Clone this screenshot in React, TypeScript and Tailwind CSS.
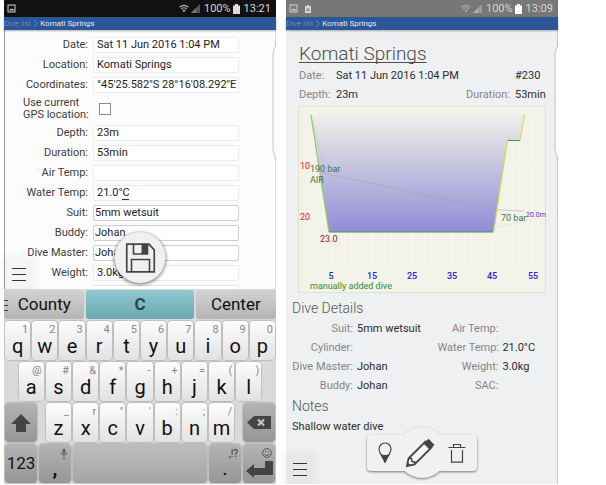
import React from "react";

const FONT = "font-['Roboto','Liberation_Sans',sans-serif]";

function PictureIcon({ className = "" }: { className?: string }) {
  return (
    <svg viewBox="0 0 9 9" className={`h-[9px] w-[9px] ${className}`} aria-hidden="true">
      <rect x="1" y="1" width="7" height="7" fill="none" stroke="currentColor" />
      <path d="M2 6.5 4 4.5 5 5.5 6 4.5 7 6.5Z" fill="currentColor" />
    </svg>
  );
}

function StatusBar({ time, dark }: { time: string; dark?: boolean }) {
  return (
    <div
      className={`flex h-[17px] items-center pr-[5px] pl-[3px] text-[11px] leading-[17px] text-[#d4d4d4] ${
        dark ? "bg-[#111111]" : "bg-[#777777]"
      }`}
    >
      <PictureIcon />
      {!dark && (
        <svg viewBox="0 0 8 10" className="ml-[6px] h-[10px] w-[8px]" aria-hidden="true">
          <path d="M1 2h2V1h2v1h2v7H1Z" fill="currentColor" />
          <path d="M2.5 6.5 4 4.2l1.5 2.3Z" fill="none" stroke="#777" strokeWidth=".8" />
        </svg>
      )}
      <svg viewBox="0 0 10 9" className="ml-auto h-[9px] w-[10px]" aria-hidden="true">
        <path d="M.7 3.2a6.2 6.2 0 0 1 8.6 0M2.2 5a4 4 0 0 1 5.6 0" fill="none" stroke="#aaa" strokeWidth="1.2" />
        <path d="M3.4 6.3a2.4 2.4 0 0 1 3.2 0L5 8.4Z" fill="#aaa" />
      </svg>
      <svg viewBox="0 0 9 9" className="ml-[2px] h-[9px] w-[9px]" aria-hidden="true">
        <path d="M9 0v9H0Z" fill={dark ? "#555" : "#9a9a9a"} />
        <path d="M5 4v5H0Z" fill={dark ? "#777" : "#b0b0b0"} />
      </svg>
      <span className="ml-1">100%</span>
      <svg viewBox="0 0 7 10" className="ml-[2px] h-[10px] w-[7px]" aria-hidden="true">
        <path d="M0 1.4h2V0h3v1.4h2V10H0Z" fill={dark ? "#ddd" : "#fff"} />
      </svg>
      <span className="ml-1">{time}</span>
    </div>
  );
}

function Breadcrumb() {
  return (
    <nav className="relative z-10 flex h-[13px] items-center bg-[#2b5797] text-[8px] leading-[13px] shadow-[0_1px_2px_rgba(0,0,0,0.3)]">
      <a href="#dives" className="font-light text-[#7f9fcb]">
        Dive list
      </a>
      <svg viewBox="0 0 5 9" className="mr-[2px] ml-[2px] h-[9px] w-[5px]" aria-hidden="true">
        <path d="M.8.8 4.2 4.5.8 8.2" fill="none" stroke="#6f93c6" strokeWidth=".9" />
      </svg>
      <a href="#dive" className="text-[#e4ebf5]">
        Komati Springs
      </a>
    </nav>
  );
}

function ScreenEdge() {
  return (
    <svg viewBox="0 0 4 120" className="absolute top-[42px] right-0 z-20 h-[120px] w-[4px]" aria-hidden="true">
      <path d="M4 0 3.5 4C3 7 1 8 1 13V106C1 110 3 112 3.5 116L4 120Z" fill="#fff" />
      <path d="M3.5 0V3C3 7 1 8 1 13V106C1 110 3 112 3.5 118" fill="none" stroke="#b5b8ba" strokeWidth=".8" />
    </svg>
  );
}

function MenuButton() {
  return (
    <button
      type="button"
      aria-label="Menu"
      className="absolute bottom-0 left-0 flex h-[29px] w-[27px] flex-col items-end justify-center gap-[5px] bg-black/3 pr-[6px] shadow-[0_0_8px_4px_rgba(0,0,0,0.04)]"
    >
      <span className="h-px w-[14px] bg-[#333]" />
      <span className="h-px w-[14px] bg-[#333]" />
      <span className="h-px w-[14px] bg-[#333]" />
    </button>
  );
}

type Field = { id: string; label: string; value: string; combo?: boolean; composing?: boolean };

const topFields: Field[] = [
  { id: "date", label: "Date:", value: "Sat 11 Jun 2016 1:04 PM" },
  { id: "location", label: "Location:", value: "Komati Springs" },
  { id: "coordinates", label: "Coordinates:", value: "°45'25.582\"S 28°16'08.292\"E" },
];

const bottomFields: Field[] = [
  { id: "depth", label: "Depth:", value: "23m" },
  { id: "duration", label: "Duration:", value: "53min" },
  { id: "air", label: "Air Temp:", value: "" },
  { id: "water", label: "Water Temp:", value: "21.0°C", composing: true },
  { id: "suit", label: "Suit:", value: "5mm wetsuit", combo: true },
  { id: "buddy", label: "Buddy:", value: "Johan", combo: true },
  { id: "master", label: "Dive Master:", value: "Johan", combo: true },
  { id: "weight", label: "Weight:", value: "3.0kg" },
];

function FieldRow({ field }: { field: Field }) {
  return (
    <div className="flex h-5 items-center gap-[5px]">
      <label htmlFor={field.id} className="w-[83px] shrink-0 text-right leading-5 text-[#3c3c3c]">
        {field.label}
      </label>
      <div className="relative flex min-w-0 flex-1">
        <input
          id={field.id}
          defaultValue={field.value}
          className={`h-4 w-full min-w-0 rounded-[2px] border bg-white text-[#1c1c1c] outline-none ${
            field.combo ? "border-[#cfcfcf] pl-px" : "border-[#ececec] pl-[3px]"
          }`}
        />
        {field.composing && <span className="absolute bottom-px left-[29px] h-px w-[7px] bg-[#333]" />}
      </div>
    </div>
  );
}

function SaveIcon() {
  return (
    <svg viewBox="0 0 30 30" className="h-[30px] w-[30px]" aria-hidden="true">
      <path d="M1.2 1.2H23.5L28.8 7V28.8H1.2Z" fill="none" stroke="#444" strokeWidth="1.8" />
      <path d="M8 1.5V11H22V1.5" fill="none" stroke="#444" strokeWidth="1.6" />
      <rect x="16" y="1" width="6" height="10" fill="#444" />
      <path d="M6 28.5V16.5H24V28.5" fill="none" stroke="#444" strokeWidth="1.6" />
    </svg>
  );
}

const lightKey = "bg-linear-to-b from-[#fdfdfd] to-[#e2e2e2]";
const greyKey = "bg-linear-to-b from-[#b4b4b4] to-[#969696]";
const keyBase =
  "relative flex h-full w-full justify-center rounded-[4px] text-[#111] shadow-[0_0_1px_1px_rgba(0,0,0,0.13)]";

function LetterKey({ k, hint }: { k: string; hint: string }) {
  return (
    <div className="col-span-4 p-px">
      <button type="button" className={`${keyBase} ${lightKey} items-end pb-1 text-[20px] leading-5`}>
        {k}
        <span className="absolute top-[3px] right-[2px] text-[11px] leading-3 text-[#888]">{hint}</span>
      </button>
    </div>
  );
}

function KeyRow({ children }: { children: React.ReactNode }) {
  return <div className="grid h-[41px] grid-cols-[repeat(40,minmax(0,1fr))]">{children}</div>;
}

const row1 = [["q", "1"], ["w", "2"], ["e", "3"], ["r", "4"], ["t", "5"], ["y", "6"], ["u", "7"], ["i", "8"], ["o", "9"], ["p", "0"]];
const row2 = [["a", "@"], ["s", "#"], ["d", "&"], ["f", "*"], ["g", "-"], ["h", "+"], ["j", "="], ["k", "("], ["l", ")"]];
const row3 = [["z", "_"], ["x", "r"], ["c", "\""], ["v", "'"], ["b", ":"], ["n", ";"], ["m", "/"]];

function Keyboard() {
  return (
    <div className="bg-[#dadada] pt-px">
      <div className="grid h-[30px] grid-cols-[3fr_4fr_3fr] gap-[2px] pb-px text-[17px] text-[#111]">
        <button type="button" className="relative rounded-[3px] bg-linear-to-b from-[#d2d2d2] to-[#b5b5b5]">
          County
          <span className="absolute top-[10px] left-0 flex flex-col gap-1">
            <i className="h-px w-1 bg-[#444]" />
            <i className="h-px w-1 bg-[#444]" />
            <i className="h-px w-1 bg-[#444]" />
          </span>
        </button>
        <button
          type="button"
          className="rounded-[3px] bg-linear-to-b from-[#92c8cf] to-[#69a8b2] font-bold text-[#27474c]"
        >
          C
        </button>
        <button type="button" className="rounded-[3px] bg-linear-to-b from-[#d2d2d2] to-[#b5b5b5]">
          Center
        </button>
      </div>
      <KeyRow>
        {row1.map(([k, h]) => (
          <LetterKey key={k} k={k} hint={h} />
        ))}
      </KeyRow>
      <KeyRow>
        <div className="col-span-2" />
        {row2.map(([k, h]) => (
          <LetterKey key={k} k={k} hint={h} />
        ))}
      </KeyRow>
      <KeyRow>
        <div className="col-span-5 p-px">
          <button type="button" aria-label="Shift" className={`${keyBase} ${greyKey} items-center`}>
            <svg viewBox="0 0 20 18" className="h-[18px] w-[20px]" aria-hidden="true">
              <path d="M10 0 20 10H15V18H5V10H0Z" fill="#444" />
            </svg>
          </button>
        </div>
        <div />
        {row3.map(([k, h]) => (
          <LetterKey key={k} k={k} hint={h} />
        ))}
        <div />
        <div className="col-span-5 p-px">
          <button type="button" aria-label="Backspace" className={`${keyBase} ${greyKey} items-center`}>
            <svg viewBox="0 0 24 13" className="h-[13px] w-[24px]" aria-hidden="true">
              <path d="M0 6.5 7 0H24V13H7Z" fill="#444" />
              <path d="M11 3.5 17 9.5M17 3.5 11 9.5" stroke="#c4c4c4" strokeWidth="2.2" />
            </svg>
          </button>
        </div>
      </KeyRow>
      <KeyRow>
        <div className="col-span-5 p-px">
          <button type="button" className={`${keyBase} ${greyKey} items-center text-[17px]`}>
            123
          </button>
        </div>
        <div className="col-span-5 p-px">
          <button type="button" className={`${keyBase} ${greyKey} items-end pb-[5px] text-[20px] leading-5 font-bold`}>
            ,
            <svg viewBox="0 0 8 11" className="absolute top-1 right-[3px] h-[11px] w-[8px]" aria-hidden="true">
              <rect x="2.5" y=".5" width="3" height="6" rx="1.5" fill="#666" />
              <path d="M1 4.5a3 3 0 0 0 6 0M4 7.5V10M2.5 10.3h3" fill="none" stroke="#666" strokeWidth=".8" />
            </svg>
          </button>
        </div>
        <div className="col-span-20 p-px">
          <button
            type="button"
            aria-label="Space"
            className={`${keyBase} bg-linear-to-b from-[#bebebe] to-[#a4a4a4]`}
          />
        </div>
        <div className="col-span-5 p-px">
          <button type="button" className={`${keyBase} ${greyKey} items-end pb-[5px] text-[20px] leading-5`}>
            .<span className="absolute top-1 right-[3px] text-[10px] leading-3 text-[#333]">,!?</span>
          </button>
        </div>
        <div className="col-span-5 p-px">
          <button type="button" aria-label="Enter" className={`${keyBase} ${greyKey} items-end pb-[5px]`}>
            <svg viewBox="0 0 27 17" className="h-[17px] w-[27px]" aria-hidden="true">
              <path d="M0 10 8 3V7H19V0H27V14H8V17Z" fill="#444" />
            </svg>
            <svg viewBox="0 0 10 10" className="absolute top-1 right-[3px] h-[10px] w-[10px]" aria-hidden="true">
              <circle cx="5" cy="5" r="4.4" fill="none" stroke="#444" strokeWidth=".8" />
              <path d="M2.6 5.8a2.5 2.5 0 0 0 4.8 0M3.6 3v1M6.4 3v1" fill="none" stroke="#444" strokeWidth=".8" />
            </svg>
          </button>
        </div>
      </KeyRow>
    </div>
  );
}

function EditScreen() {
  return (
    <section className="relative flex min-w-0 flex-1 flex-col">
      <StatusBar time="13:21" dark />
      <Breadcrumb />
      <ScreenEdge />
      <form className="relative border-x border-l-[#9a9a9a] border-r-[#dcdcdc] bg-[#fcfcfd] pt-[5px] pr-[36px] text-[11px]">
        {topFields.map((f) => (
          <FieldRow key={f.id} field={f} />
        ))}
        <div className="flex h-7 items-center gap-[5px] text-[#3c3c3c]">
          <label htmlFor="gps" className="w-[83px] shrink-0 pl-[18px] leading-3 whitespace-nowrap">
            Use current
            <br />
            GPS location:
          </label>
          <input
            id="gps"
            type="checkbox"
            className="ml-[6px] h-3 w-3 appearance-none border border-[#8a8a8a] bg-white"
          />
        </div>
        {bottomFields.map((f) => (
          <FieldRow key={f.id} field={f} />
        ))}
        <div className="h-[6px] overflow-hidden pt-[2px] pl-[88px]">
          <input aria-label="Cylinder" className="block h-4 w-full rounded-[2px] border border-[#e4e4e4] bg-white" />
        </div>
        <MenuButton />
        <button
          type="button"
          aria-label="Save"
          className="absolute bottom-[6px] left-1/2 flex h-[51px] w-[51px] -translate-x-1/2 items-center justify-center rounded-full bg-[#f0f0f1] shadow-[0_1px_3px_1px_rgba(0,0,0,0.4)]"
        >
          <SaveIcon />
        </button>
      </form>
      <Keyboard />
    </section>
  );
}

function ProfileChart() {
  return (
    <svg viewBox="0 0 248 187" className={`mt-[2px] block w-full ${FONT}`} role="img" aria-label="Dive profile">
      <defs>
        <linearGradient id="depthFill" x1="0" y1="0" x2="0" y2="1">
          <stop offset="0" stopColor="#efefec" />
          <stop offset=".3" stopColor="#d3d2e2" />
          <stop offset="1" stopColor="#918cd6" />
        </linearGradient>
      </defs>
      <rect x=".5" y=".5" width="247" height="186" fill="#f3f3e9" stroke="#dfe2cc" />
      <g stroke="#f8f8f1">
        {[33, 53, 73, 93, 113, 133, 153, 173, 194, 214, 234].map((x) => (
          <path key={x} d={`M${x}.5 9V158`} />
        ))}
        <path d="M13 59.5H240M13 110.5H240M13 158.5H240" />
      </g>
      <path d="M13 9 31 126H196L209.5 34.5H222L226.5 9Z" fill="url(#depthFill)" />
      <path d="M24 67 199 104 226 105" fill="none" stroke="#a09bbd" strokeOpacity=".5" />
      <path d="M13 9C25 60 35 92 62 104" fill="none" stroke="#a9a5cd" strokeOpacity=".3" />
      <path d="M199 121 240 112" fill="none" stroke="#e6e6de" />
      <path d="M13 9 31 126" stroke="#8ecb5a" strokeWidth="1.2" />
      <path d="M31 126H195.5M209.5 34.5H222" stroke="#3f9a52" strokeWidth="1.2" />
      <path d="M195.5 126 209.5 34.5M222 34.5 226.5 8" stroke="#d8dc55" strokeWidth="1.2" />
      <g fontSize="9">
        <g fill="#f02020" textAnchor="end">
          <text x="12" y="63">10</text>
          <text x="12" y="114">20</text>
        </g>
        <g fill="#3f6f4a">
          <text x="12" y="66">190 bar</text>
          <text x="12" y="77">AIR</text>
          <text x="203" y="115">70 bar</text>
        </g>
        <text x="22" y="136" fill="#8c1c30">23.0</text>
        <g fill="#2a1ee0" textAnchor="middle" fontWeight="500">
          <text x="33" y="173">5</text>
          <text x="74" y="173">15</text>
          <text x="114" y="173">25</text>
          <text x="154" y="173">35</text>
          <text x="194" y="173">45</text>
          <text x="235" y="173">55</text>
        </g>
        <text x="12" y="183" fill="#2f8a35">manually added dive</text>
      </g>
      <text x="228" y="111" fontSize="7" fill="#4038c8">20.0m</text>
    </svg>
  );
}

const details = [
  ["Suit:", "5mm wetsuit", "Air Temp:", ""],
  ["Cylinder:", "", "Water Temp:", "21.0°C"],
  ["Dive Master:", "Johan", "Weight:", "3.0kg"],
  ["Buddy:", "Johan", "SAC:", ""],
];

function ActionBar() {
  return (
    <div className="absolute bottom-[6px] left-1/2 flex h-[51px] w-[110px] -translate-x-1/2 items-center justify-center drop-shadow-[0_1px_1px_rgba(0,0,0,0.5)]">
      <div className="absolute inset-x-0 top-2 h-[36px] rounded-[4px] bg-[#f1f1f3]" />
      <div className="absolute top-0 left-1/2 h-[51px] w-[51px] -translate-x-1/2 rounded-full bg-[#f1f1f3]" />
      <div className="relative flex w-full items-center justify-between px-[11px]">
        <button type="button" aria-label="Map">
          <svg viewBox="0 0 14 22" className="h-[22px] w-[14px]" aria-hidden="true">
            <path d="M7 20.5C6 16.5 1 11.5 1 7A6 6 0 0 1 13 7C13 11.5 8 16.5 7 20.5Z" fill="none" stroke="#444" strokeWidth="1.2" />
            <path d="M2.5 11.5C5 13.5 9 13.5 11.5 11.5L7 21Z" fill="#444" />
          </svg>
        </button>
        <button type="button" aria-label="Edit">
          <svg viewBox="0 0 30 30" className="h-[30px] w-[30px]" aria-hidden="true">
            <path d="M2 28 3.5 20.5 20.5 3.5 26.5 9.5 9.5 26.5Z" fill="#f5f5f5" stroke="#444" strokeWidth="1.8" />
            <path d="M18.5 5.5 23.5 .8 29.5 7 24.5 11.5Z" fill="#444" />
            <path d="M3.5 20.5 6.5 20.5 7 23.5 10 24 9.5 26.5" fill="none" stroke="#444" strokeWidth="1.5" />
            <path d="M2 28 2.8 24.5 5.5 27.3Z" fill="#444" />
          </svg>
        </button>
        <button type="button" aria-label="Delete">
          <svg viewBox="0 0 18 20" className="h-[20px] w-[18px]" aria-hidden="true">
            <path d="M.5 4.5H17.5M5.5 4.5V1.5H12.5V4.5M3.5 7V19.2H14.5V7" fill="none" stroke="#444" strokeWidth="1.2" />
          </svg>
        </button>
      </div>
    </div>
  );
}

function DetailScreen() {
  return (
    <section className="relative flex min-w-0 flex-1 flex-col">
      <StatusBar time="13:09" />
      <Breadcrumb />
      <ScreenEdge />
      <div className="relative flex-1 border-r border-[#c4c6c8] bg-[#eff0f2] pt-[11px] text-[11px]">
        <div className="pr-[11px] pl-[13px]">
          <h1 className="text-[19px] leading-[25px] font-light text-[#4c4c4c] underline decoration-1 underline-offset-2 [text-decoration-skip-ink:none]">
            Komati Springs
          </h1>
          <div className="grid grid-cols-[33px_minmax(0,1fr)_45px_31px] gap-x-1 leading-[19px] whitespace-nowrap text-[#2c2c2c]">
            <span className="text-[#858585]">Date:</span>
            <span>Sat 11 Jun 2016 1:04 PM</span>
            <span />
            <span>#230</span>
            <span className="text-[#858585]">Depth:</span>
            <span>23m</span>
            <span className="text-[#858585]">Duration:</span>
            <span>53min</span>
          </div>
        </div>
        <div className="pr-[11px] pl-3">
          <ProfileChart />
        </div>
        <div className="pt-[5px] pl-[6px]">
          <h2 className="mb-px text-[14px] leading-5 font-light text-[#555]">Dive Details</h2>
          <div className="grid grid-cols-[61px_minmax(0,7fr)_61px_minmax(0,5fr)] gap-x-1 leading-[19px] whitespace-nowrap">
            {details.map((row) =>
              row.map((cell, i) => (
                <span key={row[0] + i} className={i % 2 === 0 ? "text-right text-[#858585]" : "text-[#2c2c2c]"}>
                  {cell}
                </span>
              )),
            )}
          </div>
          <h2 className="mt-px mb-px text-[14px] leading-5 font-light text-[#555]">Notes</h2>
          <p className="leading-5 text-[#2c2c2c]">Shallow water dive</p>
        </div>
        <MenuButton />
        <ActionBar />
      </div>
    </section>
  );
}

export default function App() {
  return (
    <main className={`flex gap-[10px] bg-white pr-12 pl-1 ${FONT}`}>
      <EditScreen />
      <DetailScreen />
    </main>
  );
}
